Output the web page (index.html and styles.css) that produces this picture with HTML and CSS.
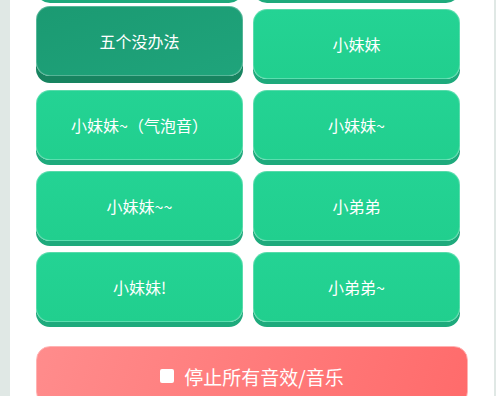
FILE: index.html
```html
<!DOCTYPE html>
<html>
	<head>
		<meta charset="UTF-8">
		<title>音效板</title>
		<link rel="stylesheet" href="styles.css">
	</head>

	<body>
		<div class="panel">
			<div class="sounds">
				<div class="btn"></div>
				<div class="btn"></div>
				<div class="btn active">五个没办法</div>
				<div class="btn">小妹妹</div>
				<div class="btn">小妹妹~（气泡音）</div>
				<div class="btn">小妹妹~</div>
				<div class="btn">小妹妹~~</div>
				<div class="btn">小弟弟</div>
				<div class="btn">小妹妹!</div>
				<div class="btn">小弟弟~</div>
			</div>
			<div class="stop">
				<span class="stop-icon"></span>
				<span>停止所有音效/音乐</span>
			</div>
		</div>
	</body>
</html>
```

FILE: styles.css
```css
body {
	margin: 0;
	background: #e0e8e5;
	font-family: "Noto Sans CJK SC", "Noto Sans", sans-serif;
	overflow: hidden;
}

.panel {
	display: flow-root;
	margin-left: 10px;
	width: 484px;
	height: 420px;
	background: #fff;
}

.sounds {
	display: grid;
	grid-template-columns: 207px 207px;
	column-gap: 10px;
	row-gap: 11px;
	padding-left: 26px;
	margin-top: -72px;
}

.btn {
	height: 70px;
	box-sizing: border-box;
	border-radius: 14px;
	border: 1px solid rgba(255, 255, 255, 0.25);
	background: linear-gradient(180deg, #24d394 0%, #21cf8e 100%);
	box-shadow: 0 5px 0 #1eaa7c;
	color: #fff;
	font-size: 16px;
	display: flex;
	align-items: center;
	justify-content: center;
}

.btn.active {
	background: linear-gradient(160deg, #1b9a72 0%, #1fa47b 100%);
	box-shadow: 0 7px 0 #178460;
	transform: translateY(-3px);
}

.stop {
	margin: 24px 0 0 26px;
	width: 432px;
	height: 60px;
	box-sizing: border-box;
	border-radius: 14px;
	border: 1px solid #ffb3b3;
	background: linear-gradient(110deg, #ff8c8c 0%, #ff6b6b 100%);
	color: #fff;
	font-size: 19px;
	display: flex;
	align-items: center;
	justify-content: center;
	gap: 10px;
}

.stop-icon {
	width: 14px;
	height: 14px;
	border-radius: 2px;
	background: #fff;
}
```
